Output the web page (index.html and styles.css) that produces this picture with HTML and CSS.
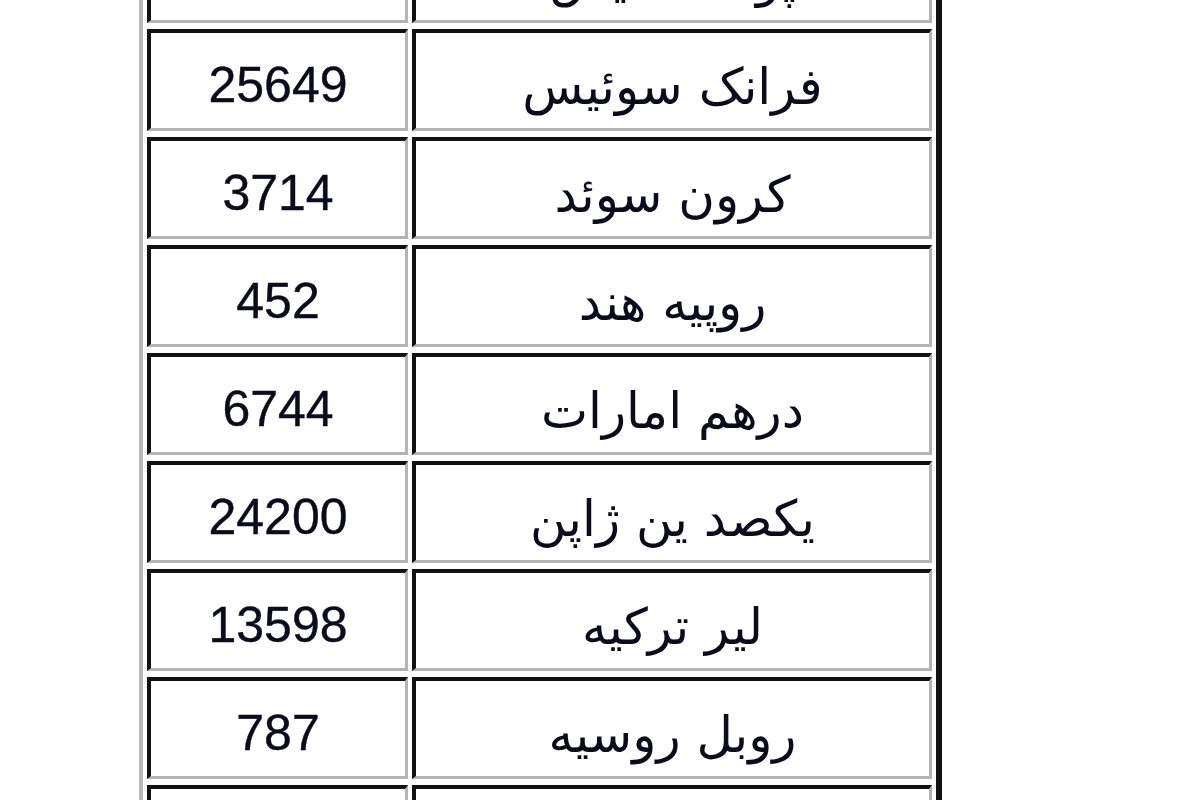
FILE: index.html
```html
<!DOCTYPE html>
<html lang="fa">
<head>
<meta charset="utf-8">
<title>نرخ ارز</title>
<link rel="stylesheet" href="styles.css">
</head>
<body>
<table class="rates" dir="rtl">
  <tbody>
    <tr><td class="name">پوند انگلیس</td><td class="num">33340</td></tr>
    <tr><td class="name">فرانک سوئیس</td><td class="num">25649</td></tr>
    <tr><td class="name">کرون سوئد</td><td class="num">3714</td></tr>
    <tr><td class="name">روپیه هند</td><td class="num">452</td></tr>
    <tr><td class="name">درهم امارات</td><td class="num">6744</td></tr>
    <tr><td class="name">یکصد ین ژاپن</td><td class="num">24200</td></tr>
    <tr><td class="name">لیر ترکیه</td><td class="num">13598</td></tr>
    <tr><td class="name">روبل روسیه</td><td class="num">787</td></tr>
    <tr><td class="name">یوان چین</td><td class="num">4485</td></tr>
  </tbody>
</table>
</body>
</html>
```
FILE: styles.css
```css
html, body {
  margin: 0;
  padding: 0;
  background: #ffffff;
  overflow: hidden;
  height: 800px;
}

.rates {
  margin-top: -89px;
  margin-left: 139px;
  border-collapse: separate;
  border-spacing: 4px 6px;
  border-style: solid;
  border-width: 4px 6px 6px 4px;
  border-color: #b8b8b8 #111111 #111111 #b8b8b8;
  color: #0b0b1c;
}

.rates td {
  box-sizing: border-box;
  height: 102px;
  padding: 8px 0 0 0;
  text-align: center;
  vertical-align: middle;
  border-style: solid;
  border-width: 4px 3px 3px 4px;
  border-color: #111111 #b4b4b4 #b4b4b4 #111111;
}

.rates td.name {
  width: 520px;
  padding-top: 12px;
  font-family: "DejaVu Sans", "Liberation Sans", sans-serif;
  font-size: 50px;
}

.rates td.num {
  width: 261px;
  font-family: "Liberation Sans", "DejaVu Sans", sans-serif;
  font-size: 50px;
  -webkit-text-stroke: 0.4px #0b0b1c;
}
```
